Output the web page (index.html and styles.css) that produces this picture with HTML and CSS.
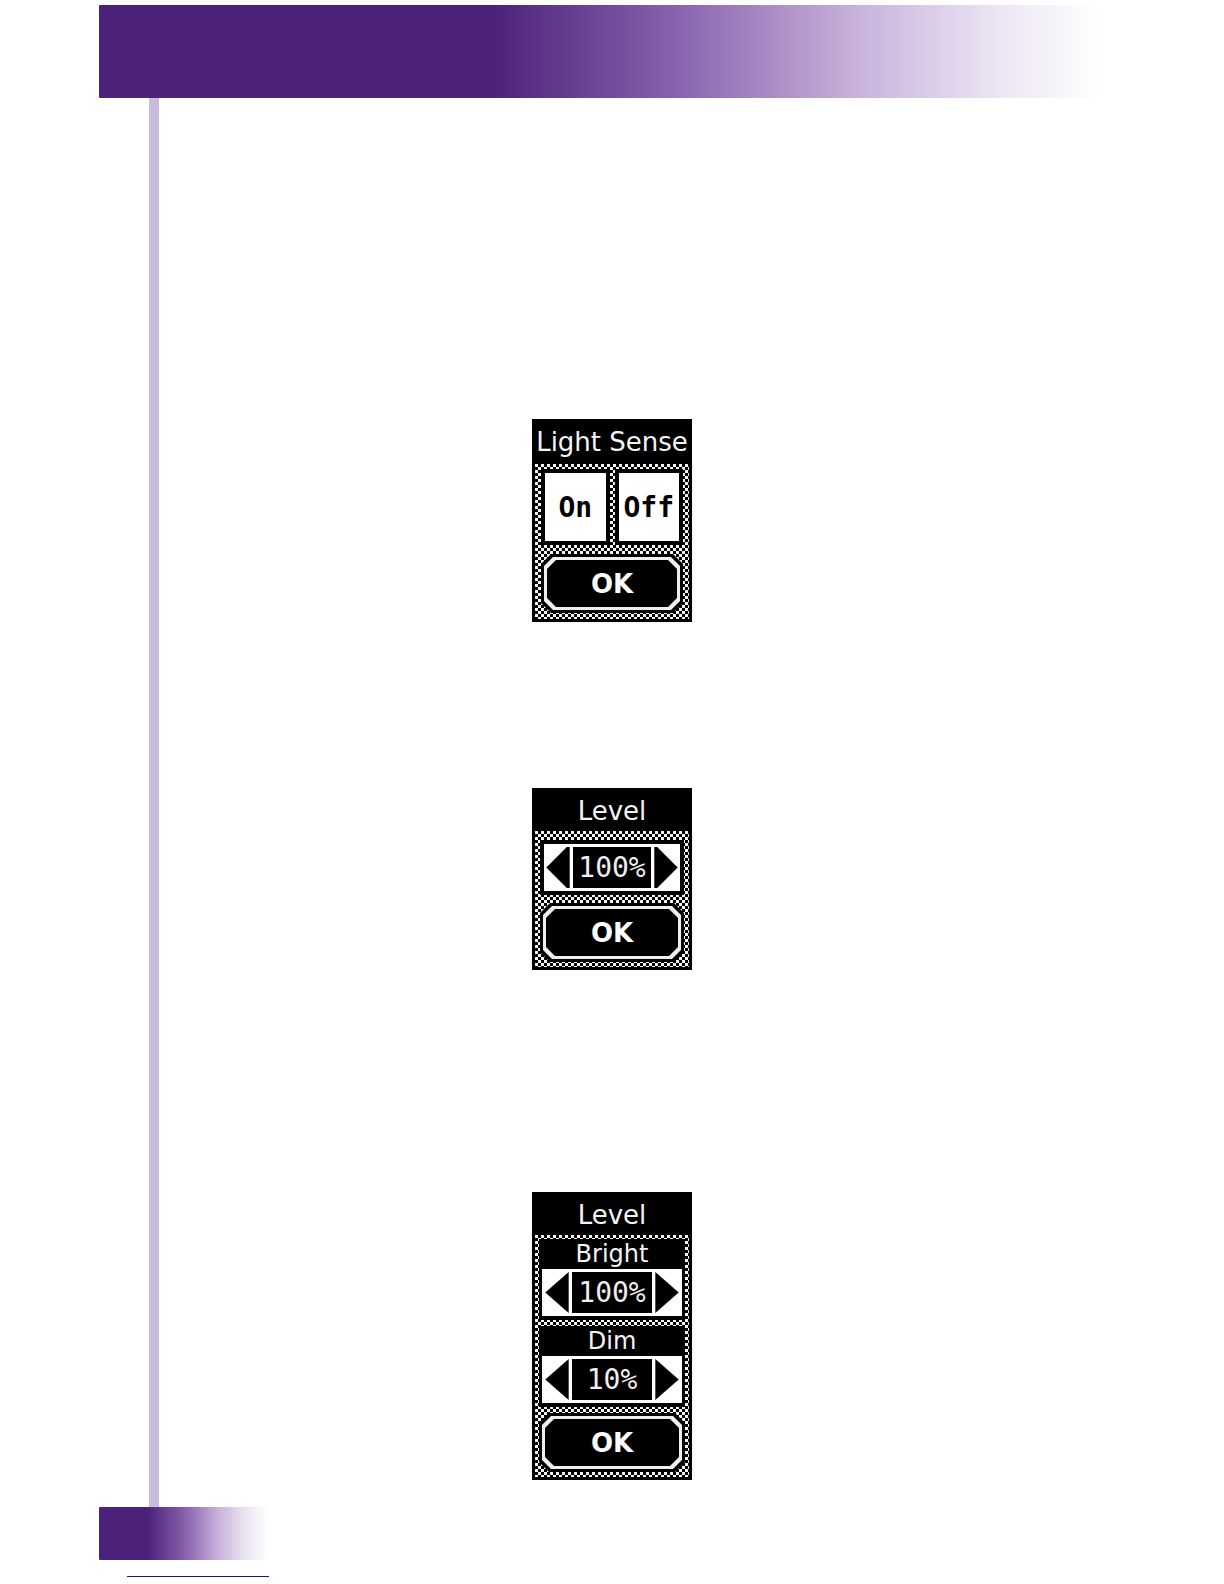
FILE: index.html
```
<!DOCTYPE html>
<html lang="en">
<head>
    <meta charset="UTF-8">
    <meta name="viewport" content="width=device-width, initial-scale=1.0">
    <title>Light Sense and Level</title>
    <link rel="stylesheet" href="styles.css">
</head>
<body>
<header class="banner"></header>

<main class="content">
    <section class="screen sense">
        <h2>Light Sense</h2>
        <div class="screen-body">
            <div class="choices">
                <button class="choice">On</button>
                <button class="choice">Off</button>
            </div>
            <button class="ok"><span>OK</span></button>
        </div>
    </section>

    <section class="screen level">
        <h2>Level</h2>
        <div class="screen-body">
            <div class="spinner">
                <button class="arrow" aria-label="Lower level"><svg viewBox="0 0 24 42"><path d="M24 0V42H21L0 21L21 0Z"/></svg></button>
                <output>100%</output>
                <button class="arrow" aria-label="Raise level"><svg viewBox="0 0 24 42"><path d="M0 0V42H3L24 21L3 0Z"/></svg></button>
            </div>
            <button class="ok"><span>OK</span></button>
        </div>
    </section>

    <section class="screen levels">
        <h2>Level</h2>
        <div class="screen-body">
            <div class="group">
                <h3>Bright</h3>
                <div class="spinner">
                    <button class="arrow" aria-label="Lower bright level"><svg viewBox="0 0 24 42"><path d="M24 0V42L0 21Z"/></svg></button>
                    <output>100%</output>
                    <button class="arrow" aria-label="Raise bright level"><svg viewBox="0 0 24 42"><path d="M0 0V42L24 21Z"/></svg></button>
                </div>
            </div>
            <div class="group">
                <h3>Dim</h3>
                <div class="spinner">
                    <button class="arrow" aria-label="Lower dim level"><svg viewBox="0 0 24 42"><path d="M24 0V42L0 21Z"/></svg></button>
                    <output>10%</output>
                    <button class="arrow" aria-label="Raise dim level"><svg viewBox="0 0 24 42"><path d="M0 0V42L24 21Z"/></svg></button>
                </div>
            </div>
            <button class="ok"><span>OK</span></button>
        </div>
    </section>
</main>

<footer>
    <div class="page-tab"></div>
    <div class="rule"></div>
</footer>
</body>
</html>
```

FILE: styles.css
```
* {box-sizing: border-box;}
body {margin: 0; padding-top: 5px; background-color: #fff; font-family: "DejaVu Sans", sans-serif;}
h2, h3 {margin: 0; font-weight: normal; text-align: center; white-space: nowrap;}
button {margin: 0; padding: 0; border: none; font-family: inherit; cursor: pointer;}

.banner {height: 93px; margin: 0 124px 0 99px; border-radius: 1px; background: linear-gradient(to right, #4b2179 0, #4b2179 39%, #8560ab 57%, #c9b3dc 76%, #ece5f3 90%, #fff 100%);}

.content {display: flex; flex-direction: column; align-items: center; margin: 0 149px; padding: 321px 10px 27px 0; border-left: 10px solid #c9bbdf;}

/* LCD screens */
.screen {width: 160px; background-color: #000; color: #f4f4f4;}
.screen h2 {height: 43px; font-size: 26px; line-height: 46px;}
.screen-body {display: flex; flex-direction: column; margin: 0 3px; border-bottom: 3px solid #000; background: repeating-conic-gradient(#000 0 25%, #f4f4f4 0 50%) 0 0 / 6px 6px;}

.sense {margin-bottom: 166px;}
.sense h2 {height: 45px;}
.sense .screen-body {padding: 5px 6px 6px;}
.level {margin-bottom: 222px;}
.level .screen-body {padding: 9px 5px 5px;}
.levels .screen-body {padding: 4px 4px 5px;}

.choices {display: flex; gap: 5px; margin-bottom: 9px;}
.choice {flex: 1; height: 76px; border: 4px solid #000; background-color: #fff; color: #000; font-family: "DejaVu Sans Mono", monospace; font-size: 28px; font-weight: bold;}

.ok {position: relative; height: 59px; background-color: #000; color: #fff; font-size: 26px; font-weight: bold; clip-path: polygon(10px 0, calc(100% - 10px) 0, 100% 10px, 100% calc(100% - 10px), calc(100% - 10px) 100%, 10px 100%, 0 calc(100% - 10px), 0 10px);}
.ok::before, .ok::after {content: ""; position: absolute; inset: 3px; background-color: #eee; clip-path: polygon(9px 0, calc(100% - 9px) 0, 100% 9px, 100% calc(100% - 9px), calc(100% - 9px) 100%, 9px 100%, 0 calc(100% - 9px), 0 9px);}
.ok::after {inset: 6px; background-color: #000;}
.ok span {position: relative; z-index: 1;}

.spinner {display: flex; padding: 3px; background-color: #fff;}
.spinner output {flex: 1; height: 41px; margin: 0 1px; border: solid #000; border-width: 0 1px; outline: 2px solid #fff; background-color: #000; color: #eee; font-family: "DejaVu Sans Mono", monospace; font-size: 28px; line-height: 41px; text-align: center;}
.arrow {width: 26px; height: 41px; padding-right: 2px; background-color: #fff;}
.arrow:last-child {padding: 0 0 0 2px;}
.arrow svg {display: block; width: 24px; height: 41px;}
.level .spinner {margin-bottom: 8px; border: 4px solid #000; padding: 3px 2px;}

.group {margin-bottom: 6px; padding: 0 3px 4px; background-color: #000;}
.group h3 {height: 30px; font-size: 24px; line-height: 30px;}

/* page foot */
.page-tab {width: 171px; height: 53px; margin-left: 99px; border-radius: 1px; background: linear-gradient(to right, #4b2179 0, #4b2179 28%, #8560ab 50%, #c9b3dc 70%, #ece5f3 86%, #fff 100%);}
.rule {width: 142px; height: 1px; margin: 16px 0 8px 127px; background-color: #16167e;}
```
